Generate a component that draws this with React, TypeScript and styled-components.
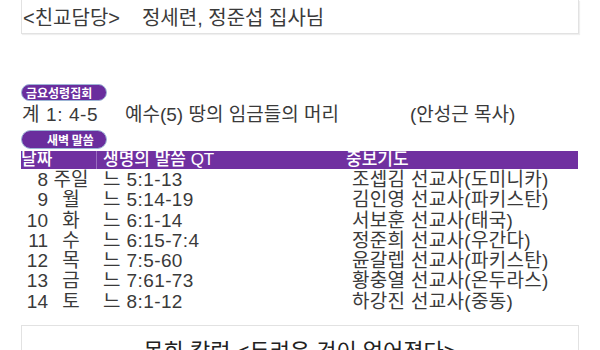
import React from "react";
import styled, { createGlobalStyle } from "styled-components";

const Global = createGlobalStyle`
  html, body { margin: 0; padding: 0; background: #fff; }
  body {
    font-family: "Liberation Sans", "Noto Sans CJK KR", sans-serif;
    color: #3a3a3a;
    overflow: hidden;
  }
`;

const Page = styled.div`
  width: 600px;
  height: 350px;
  overflow: hidden;
  padding: 0 21px;
  box-sizing: border-box;
`;

const TopBox = styled.div`
  border: 1px solid #e2e2e2;
  border-top: none;
  box-shadow: 1px 1px 1px #efefef;
  height: 34px;
  display: flex;
  align-items: flex-end;
  padding: 0 0 3px 1px;
  box-sizing: border-box;
  font-size: 20px;
  line-height: 24px;
  white-space: pre;
`;

const Spacer = styled.span<{ w: number }>`
  display: inline-block;
  width: ${(p) => p.w}px;
`;

const Badge = styled.div<{ top: number; h: number; pl: number }>`
  margin-top: ${(p) => p.top}px;
  width: 86px;
  height: ${(p) => p.h}px;
  box-sizing: border-box;
  border: 1px solid #9db6d6;
  border-radius: 10px;
  background: #6a2d9d;
  color: #fff;
  font-family: "Noto Sans CJK KR", sans-serif;
  font-size: 12px;
  font-weight: 700;
  line-height: ${(p) => p.h - 2}px;
  padding-left: ${(p) => p.pl}px;
`;

const VerseLine = styled.div`
  display: flex;
  font-size: 19px;
  line-height: 24px;
  height: 24px;
  margin-top: 2px;
  padding-left: 1px;
  white-space: pre;
`;

const Cell = styled.span<{ w?: number; ls?: number }>`
  ${(p) => (p.w ? `width: ${p.w}px; flex: none;` : "")}
  letter-spacing: ${(p) => p.ls ?? 0}px;
`;

const Table = styled.div`
  display: grid;
  grid-template-columns: 75px 250px 1fr;
  grid-template-rows: 18px;
  grid-auto-rows: 20.3px;
  width: 557px;
  margin-top: 2px;
`;

const Head = styled.div<{ divider?: boolean }>`
  background: #7030a0;
  color: #fff;
  font-size: 17px;
  font-weight: 500;
  line-height: 18px;
  padding-left: ${(p) => (p.divider ? 6 : 0)}px;
  border-left: ${(p) => (p.divider ? "1px solid #9a6cc0" : "none")};
  overflow: hidden;
  white-space: nowrap;
`;

const DayCell = styled.div`
  display: grid;
  grid-template-columns: 27px 40px;
  column-gap: 3px;
  font-size: 19px;
  line-height: 20px;
  padding-top: 1px;
  white-space: nowrap;
`;

const Num = styled.span`
  text-align: right;
`;

const DayName = styled.span`
  text-align: center;
`;

const Text = styled.div<{ pl: number; ls: number }>`
  font-size: 19px;
  line-height: 20px;
  padding-top: 1px;
  padding-left: ${(p) => p.pl}px;
  letter-spacing: ${(p) => p.ls}px;
  white-space: nowrap;
`;

const BottomBox = styled.div`
  margin-top: 14px;
  height: 60px;
  border: 1px solid #e2e2e2;
  display: flex;
  justify-content: center;
  padding-top: 13px;
  font-size: 22px;
  line-height: 26px;
  color: #222;
`;

const rows = [
  ["8", "주일", "느 5:1-13", "조셉김 선교사(도미니카)"],
  ["9", "월", "느 5:14-19", "김인영 선교사(파키스탄)"],
  ["10", "화", "느 6:1-14", "서보훈 선교사(태국)"],
  ["11", "수", "느 6:15-7:4", "정준희 선교사(우간다)"],
  ["12", "목", "느 7:5-60", "윤갈렙 선교사(파키스탄)"],
  ["13", "금", "느 7:61-73", "황충열 선교사(온두라스)"],
  ["14", "토", "느 8:1-12", "하강진 선교사(중동)"],
];

export default function App() {
  return (
    <>
      <Global />
      <Page>
        <TopBox>
          <span>&lt;친교담당&gt;</span>
          <Spacer w={22} />
          <span>정세련, 정준섭 집사님</span>
        </TopBox>
        <Badge top={50} h={17} pl={4}>금요성령집회</Badge>
        <VerseLine>
          <Cell w={103} ls={0.6}>계 1: 4-5</Cell>
          <Cell w={285}>예수(5) 땅의 임금들의 머리</Cell>
          <Cell>(안성근 목사)</Cell>
        </VerseLine>
        <Badge top={3} h={19} pl={25}>새벽 말씀</Badge>
        <Table>
          <Head>날짜</Head>
          <Head divider>생명의 말씀 QT</Head>
          <Head>중보기도</Head>
          {rows.map(([n, d, q, p]) => (
            <React.Fragment key={n}>
              <DayCell>
                <Num>{n}</Num>
                <DayName>{d}</DayName>
              </DayCell>
              <Text pl={7} ls={0.4}>{q}</Text>
              <Text pl={6} ls={0.3}>{p}</Text>
            </React.Fragment>
          ))}
        </Table>
        <BottomBox>목회 칼럼 &lt;두려운 것이 없어졌다&gt;</BottomBox>
      </Page>
    </>
  );
}
